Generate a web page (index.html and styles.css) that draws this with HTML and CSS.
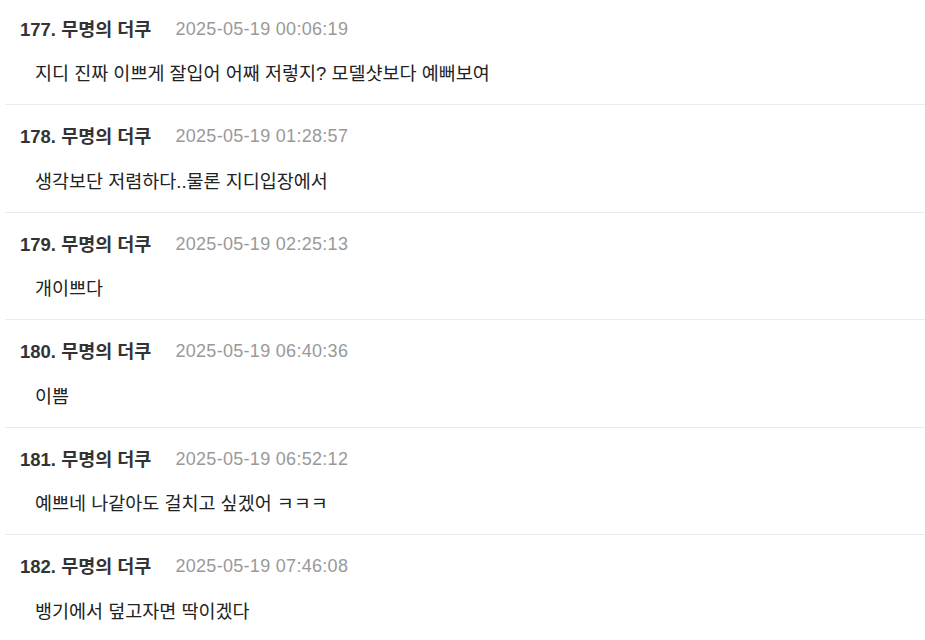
FILE: index.html
```html
<!DOCTYPE html>
<html lang="ko">
<head>
    <meta charset="UTF-8">
    <meta name="viewport" content="width=device-width, initial-scale=1.0">
    <title>댓글</title>
    <link rel="stylesheet" href="styles.css">
</head>
<body>
    <ul class="comment-list">
        <li class="comment">
            <div class="comment-head">
                <span class="comment-author">177. 무명의 더쿠</span>
                <span class="comment-date">2025-05-19 00:06:19</span>
            </div>
            <p class="comment-body">지디 진짜 이쁘게 잘입어 어째 저렇지? 모델샷보다 예뻐보여</p>
        </li>
        <li class="comment">
            <div class="comment-head">
                <span class="comment-author">178. 무명의 더쿠</span>
                <span class="comment-date">2025-05-19 01:28:57</span>
            </div>
            <p class="comment-body">생각보단 저렴하다..물론 지디입장에서</p>
        </li>
        <li class="comment">
            <div class="comment-head">
                <span class="comment-author">179. 무명의 더쿠</span>
                <span class="comment-date">2025-05-19 02:25:13</span>
            </div>
            <p class="comment-body">개이쁘다</p>
        </li>
        <li class="comment">
            <div class="comment-head">
                <span class="comment-author">180. 무명의 더쿠</span>
                <span class="comment-date">2025-05-19 06:40:36</span>
            </div>
            <p class="comment-body">이쁨</p>
        </li>
        <li class="comment">
            <div class="comment-head">
                <span class="comment-author">181. 무명의 더쿠</span>
                <span class="comment-date">2025-05-19 06:52:12</span>
            </div>
            <p class="comment-body">예쁘네 나같아도 걸치고 싶겠어 ㅋㅋㅋ</p>
        </li>
        <li class="comment">
            <div class="comment-head">
                <span class="comment-author">182. 무명의 더쿠</span>
                <span class="comment-date">2025-05-19 07:46:08</span>
            </div>
            <p class="comment-body">뱅기에서 덮고자면 딱이겠다</p>
        </li>
    </ul>
</body>
</html>
```

FILE: styles.css
```css
* {
    box-sizing: border-box;
    margin: 0;
    padding: 0;
}

body {
    background-color: #ffffff;
    color: #333;
    font-family: "Liberation Sans", "Noto Sans CJK KR", sans-serif;
}

.comment-list {
    list-style: none;
    margin-top: -2.5px;
}

.comment {
    margin-left: 5px;
    padding: 19px 0 18px 15px;
    border-bottom: 1px solid #ebebeb;
}

.comment-head {
    display: flex;
    align-items: center;
    gap: 24px;
    height: 25px;
    line-height: 25px;
}

.comment-author {
    font-size: 18.5px;
    font-weight: 700;
    color: #333;
}

.comment-date {
    font-size: 18px;
    letter-spacing: 0.3px;
    color: #999;
}

.comment-body {
    height: 25px;
    margin-top: 19.5px;
    padding-left: 15px;
    font-size: 18.5px;
    line-height: 25px;
    color: #222;
}
```
